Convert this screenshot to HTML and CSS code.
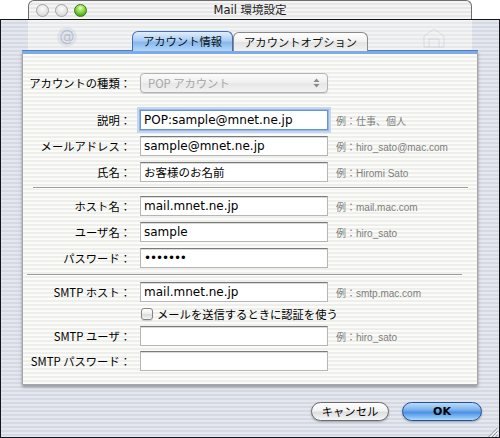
FILE: index.html
```html
<!DOCTYPE html>
<html lang="ja">
<head>
<meta charset="utf-8">
<title>Mail 環境設定</title>
<link rel="stylesheet" href="styles.css">
</head>
<body>
<div class="screen">
  <div class="titlebar">
    <div class="lights">
      <span class="light gray"></span>
      <span class="light gray"></span>
      <span class="light green"></span>
    </div>
    <div class="title">Mail 環境設定</div>
    <div></div>
  </div>
  <div class="sheet">
    <div class="head">
      <div class="ghost">
        <span class="ghost-at">@</span>
        <svg class="ghost-icon" width="26" height="22" viewBox="0 0 26 22">
          <path d="M3 20 L3 9 L13 2 L23 9 L23 20 Z M8 20 L8 12 L18 12 L18 20" fill="none" stroke="#9aa3b8" stroke-width="1" opacity="0.25"/>
        </svg>
      </div>
      <div class="tabs">
        <div class="tab active">アカウント情報</div>
        <div class="tab">アカウントオプション</div>
      </div>
    </div>
    <div class="panel">
      <div class="row">
        <div class="label">アカウントの種類：</div>
        <div class="popup">
          <span>POP アカウント</span>
          <svg width="7" height="10" viewBox="0 0 7 10"><path d="M3.5 0.5 L6.5 4 L0.5 4 Z M3.5 9.5 L6.5 6 L0.5 6 Z" fill="#8a8a8a"/></svg>
        </div>
      </div>
      <div class="row gap17">
        <div class="label">説明：</div>
        <div class="field focus">POP:sample@mnet.ne.jp</div>
        <div class="hint">例：仕事、個人</div>
      </div>
      <div class="row">
        <div class="label">メールアドレス：</div>
        <div class="field">sample@mnet.ne.jp</div>
        <div class="hint">例：hiro_sato@mac.com</div>
      </div>
      <div class="row">
        <div class="label">氏名：</div>
        <div class="field jp">お客様のお名前</div>
        <div class="hint">例：Hiromi Sato</div>
      </div>
      <div class="sep sep1"></div>
      <div class="row first">
        <div class="label">ホスト名：</div>
        <div class="field">mail.mnet.ne.jp</div>
        <div class="hint">例：mail.mac.com</div>
      </div>
      <div class="row">
        <div class="label">ユーザ名：</div>
        <div class="field">sample</div>
        <div class="hint">例：hiro_sato</div>
      </div>
      <div class="row">
        <div class="label">パスワード：</div>
        <div class="field dots">•••••••</div>
        <div class="hint"></div>
      </div>
      <div class="sep sep2"></div>
      <div class="row first">
        <div class="label">SMTP ホスト：</div>
        <div class="field">mail.mnet.ne.jp</div>
        <div class="hint">例：smtp.mac.com</div>
      </div>
      <div class="row check">
        <div class="label"></div>
        <div class="checkline"><span class="checkbox"></span><span class="checktext">メールを送信するときに認証を使う</span></div>
      </div>
      <div class="row">
        <div class="label">SMTP ユーザ：</div>
        <div class="field"></div>
        <div class="hint">例：hiro_sato</div>
      </div>
      <div class="row gap5">
        <div class="label">SMTP パスワード：</div>
        <div class="field"></div>
        <div class="hint"></div>
      </div>
    </div>
    <div class="footer">
      <div class="buttons">
        <div class="btn cancel">キャンセル</div>
        <div class="btn ok">OK</div>
      </div>
      <svg class="grip" width="11" height="10" viewBox="0 0 11 10">
        <path d="M10.5 1 L1.5 10 M10.5 4.5 L5 10 M10.5 8 L8.5 10" stroke="#8f929c" stroke-width="1"/>
        <path d="M11 2 L2.5 10.5 M11 5.5 L6 10.5" stroke="#ffffff" stroke-width="1" opacity="0.8"/>
      </svg>
    </div>
  </div>
</div>
</body>
</html>
```

FILE: styles.css
```css
* { box-sizing: border-box; margin: 0; padding: 0; }
html, body { width: 500px; height: 438px; overflow: hidden; background: #ffffff; }
body {
  font-family: "Noto Sans CJK JP", "DejaVu Sans", sans-serif;
  font-size: 11.3px;
  color: #000;
}
.screen { width: 500px; height: 438px; display: flex; flex-direction: column; }

.titlebar {
  height: 19px;
  margin: 0 28px;
  border: 1px solid #6e6e6e;
  border-bottom: none;
  border-radius: 6px 6px 0 0;
  background: repeating-linear-gradient(#f4f4f4 0 2px, #e7e7e7 2px 4px);
  display: grid;
  grid-template-columns: 1fr auto 1fr;
  align-items: center;
}
.lights { display: flex; gap: 6px; padding-left: 7px; }
.light { width: 13px; height: 13px; border-radius: 50%; }
.light.gray {
  background: radial-gradient(circle at 50% 35%, #fbfbfb 0, #e2e2e2 60%, #cfcfcf 100%);
  border: 1px solid #a2a2a2;
}
.light.green {
  background: radial-gradient(circle at 50% 28%, #e4fbc4 0, #8fdc48 40%, #46a818 80%, #2f8a0c 100%);
  border: 1px solid #3a7a18;
}
.title {
  font-family: "DejaVu Sans", "Noto Sans CJK JP", sans-serif;
  font-size: 11.5px;
  color: #1c1c1c;
  line-height: 17px;
}

.sheet {
  flex: 1;
  border: 1px solid #15161b;
  background: repeating-linear-gradient(#e5e7ee 0 2px, #d5d9e4 2px 4px);
  display: flex;
  flex-direction: column;
}
.head { height: 31px; display: grid; }
.ghost, .tabs { grid-area: 1 / 1; }
.ghost {
  margin: 0 27px;
  background: repeating-linear-gradient(#f3f3f3 0 2px, #e8e9eb 2px 4px);
  display: flex;
  justify-content: space-between;
  align-items: flex-start;
  padding: 7px 25px 0 29px;
}
.ghost-at {
  width: 20px; height: 20px;
  border-radius: 50%;
  background: rgba(170, 180, 205, 0.22);
  color: rgba(120, 135, 165, 0.4);
  font-family: "DejaVu Sans", sans-serif;
  font-size: 15px;
  line-height: 19px;
  text-align: center;
}
.ghost-icon { margin-top: 0; }

.tabs {
  align-self: end;
  justify-self: center;
  display: flex;
  align-items: flex-end;
  position: relative;
  z-index: 1;
}
.tab {
  height: 19px;
  padding: 0 10px;
  border: 1px solid #8a8a8a;
  border-bottom: none;
  border-radius: 6px 6px 0 0;
  background: linear-gradient(#ffffff, #f1f1f1 48%, #e3e3e3 52%, #f2f2f2);
  font-size: 11.3px;
  line-height: 18px;
  color: #111;
  white-space: nowrap;
}
.tab.active {
  height: 20px;
  border-color: #3f6fb4;
  background: linear-gradient(#e0eefc, #a9cdf4 45%, #85b8ee 55%, #b4d8fa);
  line-height: 19px;
}

.panel {
  margin: 0 21px;
  height: 334px;
  border: 1px solid #a6a6a6;
  border-top: 3px solid #7eabe6;
  box-shadow: 0 -1px 0 #4e7fc2, 0 2px 3px rgba(0, 0, 0, 0.35);
  background: repeating-linear-gradient(#fbfbf9 0 2px, #eeefeb 2px 4px);
  padding-top: 19px;
  display: flex;
  flex-direction: column;
}
.row {
  display: grid;
  grid-template-columns: 117px 188px 1fr;
  align-items: center;
  height: 20px;
  margin-top: 6px;
}
.row:first-child, .row.first { margin-top: 0; }
.row.gap17 { margin-top: 17px; }
.row.gap5 { margin-top: 5px; }
.row.check { height: 12px; }
.label {
  text-align: right;
  padding-right: 9px;
  white-space: nowrap;
  line-height: 20px;
  color: #000;
}
.field {
  height: 20px;
  background: #fff;
  border: 1px solid #b6b6b6;
  border-top-color: #7a7a7a;
  box-shadow: inset 0 1px 0 #dadada;
  font-family: "DejaVu Sans", "Noto Sans CJK JP", sans-serif;
  font-size: 12px;
  line-height: 18px;
  padding-left: 3px;
  white-space: nowrap;
  overflow: hidden;
  color: #000;
}
.field.jp { font-family: "Noto Sans CJK JP", sans-serif; font-size: 11.5px; }
.field.dots { letter-spacing: -1.1px; font-size: 12px; }
.field.focus {
  border-color: #6f95c8;
  box-shadow: 0 0 0 1px #93b8e8, 0 0 0 3px #c2d8f2;
}
.hint {
  font-family: "Liberation Sans", "Noto Sans CJK JP", sans-serif;
  font-size: 10px;
  color: #7e7e7e;
  padding-left: 8px;
  white-space: nowrap;
}
.popup {
  height: 20px;
  border: 1px solid #b2b2b2;
  border-radius: 4px;
  background: linear-gradient(#fbfbfb, #efefef 50%, #e6e6e6 51%, #f3f3f3);
  box-shadow: 0 1px 1px rgba(0, 0, 0, 0.12);
  color: #a6a6a6;
  display: flex;
  justify-content: space-between;
  align-items: center;
  padding: 0 7px 0 7px;
  font-size: 11.3px;
}
.sep {
  height: 2px;
  border-top: 1px solid #9c9c9c;
  border-bottom: 1px solid #ffffff;
}
.sep1 { margin: 5px 9px 7px 10px; }
.sep2 { margin: 6px 15px 6px 4px; }

.checkline {
  display: flex;
  align-items: center;
  gap: 4px;
  padding-left: 1px;
  grid-column: 2 / 4;
  white-space: nowrap;
}
.checkbox {
  width: 12px; height: 12px;
  border: 1px solid #858585;
  border-radius: 3px;
  background: linear-gradient(#ffffff, #ececec 50%, #dcdcdc 55%, #f4f4f4);
  box-shadow: 0 1px 1px rgba(0, 0, 0, 0.15);
}
.checktext { font-size: 11.3px; line-height: 12px; }

.footer {
  flex: 1;
  display: flex;
  flex-direction: column;
  padding-top: 17px;
}
.buttons {
  display: flex;
  justify-content: flex-end;
  gap: 13px;
  padding-right: 17px;
}
.btn {
  height: 19px;
  border-radius: 10px;
  font-size: 11.3px;
  line-height: 17px;
  text-align: center;
  color: #000;
}
.cancel {
  width: 78px;
  border: 1px solid #6a6a6a;
  background: linear-gradient(#fefefe, #f3f3f3 45%, #dedede 55%, #f7f7f7);
  box-shadow: 0 1px 2px rgba(0, 0, 0, 0.3);
}
.ok {
  width: 80px;
  border: 1px solid #234f98;
  background: linear-gradient(#bcdcfa, #7cb3ee 40%, #4d90e4 55%, #86c0f6 85%, #b4dcfc);
  box-shadow: 0 1px 2px rgba(0, 0, 0, 0.3);
  font-family: "DejaVu Sans", sans-serif;
  font-weight: bold;
  font-size: 11px;
}
.grip { align-self: flex-end; margin: 6px 1px 0 0; }
```
